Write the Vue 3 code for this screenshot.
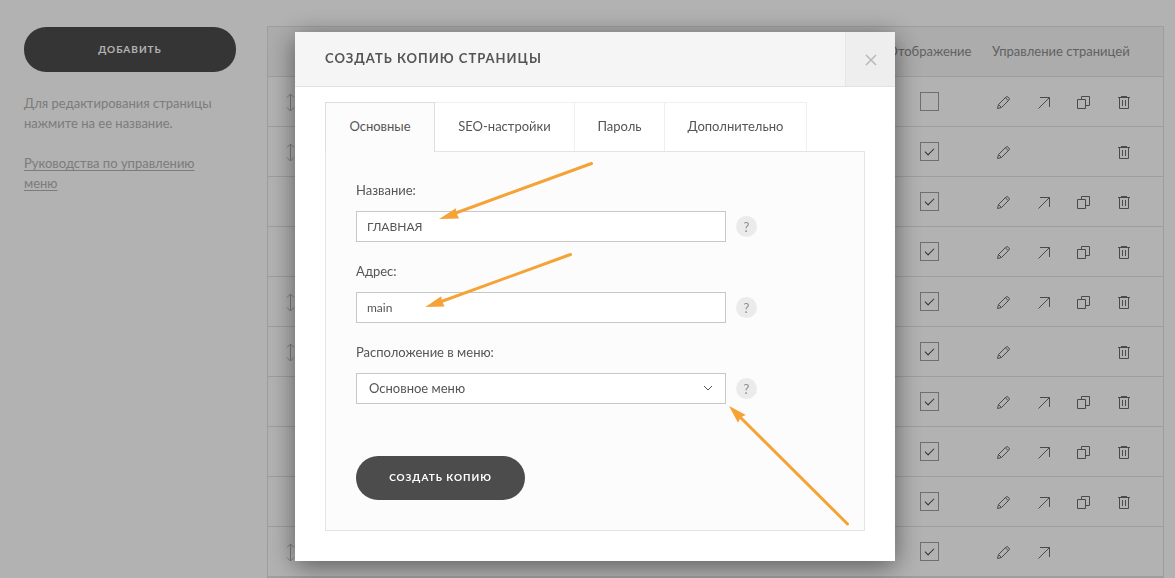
<script setup>
import { ref } from 'vue'

const rows = ref([
  { drag: true, shown: false, open: true, copy: true, remove: true },
  { drag: true, shown: true, open: false, copy: false, remove: true },
  { drag: false, shown: true, open: true, copy: true, remove: true },
  { drag: false, shown: true, open: true, copy: true, remove: true },
  { drag: true, shown: true, open: true, copy: true, remove: true },
  { drag: true, shown: true, open: false, copy: false, remove: true },
  { drag: false, shown: true, open: true, copy: true, remove: true },
  { drag: false, shown: true, open: true, copy: true, remove: true },
  { drag: false, shown: true, open: true, copy: true, remove: true },
  { drag: true, shown: true, open: true, copy: false, remove: false }
])

const tabs = ['Основные', 'SEO-настройки', 'Пароль', 'Дополнительно']
const activeTab = ref(0)
const title = ref('ГЛАВНАЯ')
const address = ref('main')
const menu = ref('main')
</script>

<template>
  <div class="page">
    <aside class="side">
      <button type="button" class="pill add">Добавить</button>
      <p class="hint">Для редактирования страницы нажмите на ее название.</p>
      <a href="#" class="guide">Руководства по управлению меню</a>
    </aside>

    <main class="content">
      <table class="pages">
        <thead>
          <tr>
            <th class="c-drag"></th>
            <th></th>
            <th class="c-show">Отображение</th>
            <th class="c-manage">Управление страницей</th>
          </tr>
        </thead>
        <tbody>
          <tr v-for="(row, i) in rows" :key="i">
            <td class="c-drag">
              <svg v-if="row.drag" class="drag" width="9" height="19" viewBox="0 0 9 19">
                <path d="M4.500 1v17M1 4.500l3.500-3.500L8 4.500M1 14.500l3.500 3.500L8 14.500" />
              </svg>
            </td>
            <td></td>
            <td class="c-show">
              <input v-model="row.shown" type="checkbox" class="check" aria-label="Отображение" />
            </td>
            <td class="c-manage">
              <div class="actions">
                <button type="button" class="act" aria-label="Редактировать">
                  <svg width="16" height="17" viewBox="0 0 16 17">
                    <path d="M2.500 15.500l1-4 7.300-7.300a1.700 1.700 0 0 1 2.400 0l.6.6a1.700 1.700 0 0 1 0 2.400L6.500 14.500zM3.500 11.500l3 3M10.300 4.700l3 3" />
                  </svg>
                </button>
                <button v-if="row.open" type="button" class="act open" aria-label="Открыть">
                  <svg width="16" height="17" viewBox="0 0 16 17">
                    <path d="M3.500 15.500l11-11M5 4.500h9.500V14" />
                  </svg>
                </button>
                <button v-if="row.copy" type="button" class="act copy" aria-label="Копировать">
                  <svg width="16" height="17" viewBox="0 0 16 17">
                    <path d="M2.500 6.500h8v9h-8zM6.500 6.500v-3h8v9h-4" />
                  </svg>
                </button>
                <button v-if="row.remove" type="button" class="act remove" aria-label="Удалить">
                  <svg width="16" height="17" viewBox="0 0 16 17">
                    <path d="M3 4.500h12M6 3.500h6M4.500 4.500v11h9v-11M7.500 7v6M10.500 7v6" />
                  </svg>
                </button>
              </div>
            </td>
          </tr>
        </tbody>
      </table>
    </main>
  </div>

  <div class="overlay">
    <section class="dialog" role="dialog" aria-labelledby="dialog-title">
      <header class="head">
        <h1 id="dialog-title" class="title">Создать копию страницы</h1>
        <button type="button" class="close" aria-label="Закрыть">
          <svg width="12" height="12" viewBox="0 0 12 12"><path d="M1 1l10 10M11 1L1 11" /></svg>
        </button>
      </header>

      <div class="body">
        <div class="tabs" role="tablist">
          <button
            v-for="(tab, i) in tabs"
            :key="tab"
            type="button"
            role="tab"
            class="tab"
            :class="{ active: i === activeTab }"
            :aria-selected="i === activeTab"
            @click="activeTab = i"
          >{{ tab }}</button>
        </div>

        <form class="panel" @submit.prevent>
          <div class="field">
            <label for="f-title">Название:</label>
            <div class="line">
              <input id="f-title" v-model="title" type="text" class="control" />
              <button type="button" class="help">?</button>
            </div>
          </div>
          <div class="field">
            <label for="f-address">Адрес:</label>
            <div class="line">
              <input id="f-address" v-model="address" type="text" class="control" />
              <button type="button" class="help">?</button>
            </div>
          </div>
          <div class="field">
            <label for="f-menu">Расположение в меню:</label>
            <div class="line">
              <div class="select">
                <select id="f-menu" v-model="menu" class="control">
                  <option value="main">Основное меню</option>
                </select>
                <svg class="chevron" width="10" height="6" viewBox="0 0 10 6"><path d="M1 1l4 4 4-4" /></svg>
              </div>
              <button type="button" class="help">?</button>
            </div>
          </div>
          <button type="submit" class="pill submit">Создать копию</button>
        </form>
      </div>

      <svg class="arrows" width="600" height="529" viewBox="0 0 600 529" aria-hidden="true">
        <path class="shaft" d="M296.500 131.500L158 182M275.500 222.500L145 270M552.500 492L445 385" />
        <path class="tip" d="M147.500 186l12.500-8 .5 3.500 2 4zM133.500 274l12-8 .5 3.500 2 4zM436.500 376.500l12 6.500-3.500 1.500-2 4z" />
      </svg>
    </section>
  </div>
</template>

<style>
body {
  background: #fff;
  overflow: hidden;
}
</style>

<style scoped>
.page,
.overlay {
  font-family: Lato, "Noto Sans", sans-serif;
  font-size: 13px;
  line-height: 20px;
}
button,
input,
select {
  font: inherit;
  color: inherit;
  margin: 0;
}
button {
  padding: 0;
  border: 0;
  background: none;
}
svg {
  display: block;
  fill: none;
  stroke: currentColor;
}
.page {
  display: flex;
  align-items: flex-start;
  height: 100vh;
  overflow: hidden;
}
.side {
  box-sizing: border-box;
  flex: 0 0 267px;
  padding: 27px 31px 0 24px;
  color: #b2b2b2;
}
.pill {
  display: block;
  padding-bottom: 2px;
  border-radius: 22px;
  background: #4c4c4c;
  color: #fff;
  font-size: 10px;
  font-weight: 700;
  letter-spacing: 1px;
  text-transform: uppercase;
}
.add {
  width: 100%;
  height: 45px;
}
.hint {
  margin: 21px 0 20px;
}
.guide {
  display: block;
  padding-right: 20px;
  color: inherit;
  text-underline-offset: 2px;
}
.content {
  flex: 1;
  padding: 26px 11px 0 0;
}
.pages {
  width: 100%;
  table-layout: fixed;
  border: 1px solid #e2e2e2;
  border-spacing: 0;
}
.pages th,
.pages td {
  box-sizing: border-box;
  height: 50px;
  padding: 0;
  border-bottom: 1px solid #e2e2e2;
}
.pages th {
  padding-bottom: 2px;
  background: #f7f7f7;
  color: #8c8c8c;
  font-weight: 400;
  text-align: left;
  white-space: nowrap;
}
.c-drag {
  width: 45px;
}
.pages .c-show {
  width: 107px;
  text-align: center;
}
.c-manage {
  width: 180px;
}
.pages th.c-manage {
  padding-left: 9px;
}
.drag {
  margin: 2px auto 0;
  color: #b4b4b4;
}
.check {
  appearance: none;
  display: grid;
  place-items: center;
  width: 19px;
  height: 19px;
  margin: 0 auto;
  border: 1px solid #a0a0a0;
}
.check:checked::before {
  content: "";
  width: 8px;
  height: 4px;
  margin-bottom: 3px;
  border: solid #444;
  border-width: 0 0 1px 1px;
  transform: rotate(-45deg);
}
.actions {
  display: grid;
  grid-template-columns: repeat(4, 40px);
  color: #6a6a6a;
}
.act {
  display: grid;
  place-items: center;
  height: 49px;
}
.open {
  grid-column: 2;
}
.copy {
  grid-column: 3;
}
.remove {
  grid-column: 4;
}
.overlay {
  position: fixed;
  inset: 0;
  display: flex;
  justify-content: center;
  align-items: flex-start;
  padding: 32px 0 0 15px;
  background: rgba(0, 0, 0, 0.3);
  color: #555;
}
.dialog {
  position: relative;
  width: 600px;
  background: #fff;
  box-shadow: 0 5px 25px rgba(0, 0, 0, 0.5);
}
.head {
  display: flex;
  justify-content: space-between;
  height: 54px;
  border-bottom: 1px solid #e2e2e2;
  background: #f5f5f5;
}
.title {
  margin: 0;
  padding-left: 30px;
  font-size: 13px;
  font-weight: 700;
  line-height: 52px;
  letter-spacing: 1px;
  text-transform: uppercase;
}
.close {
  display: grid;
  place-items: center;
  width: 50px;
  padding-top: 2px;
  border-left: 1px solid #e6e6e6;
  background: #eee;
  color: #b8b8b8;
  stroke-width: 1.5;
}
.body {
  padding: 15px 30px 30px;
}
.tabs {
  display: grid;
  grid-template-columns: 110px 140px 90px 142px;
}
.tab {
  height: 49px;
  padding-bottom: 2px;
  border: solid #efefef;
  border-width: 1px 1px 0 0;
}
.tab.active {
  height: 50px;
  margin-bottom: -1px;
  padding-bottom: 3px;
  border-color: #ddd;
  border-left-width: 1px;
  background: #fcfcfc;
  z-index: 1;
}
.panel {
  padding: 28px 30px 30px;
  border: 1px solid #e4e4e4;
  background: #fcfcfc;
}
.field {
  margin-bottom: 19px;
}
.field label {
  display: block;
  margin-bottom: 11px;
}
.line {
  display: flex;
  align-items: center;
  gap: 10px;
}
.control {
  box-sizing: border-box;
  width: 370px;
  height: 31px;
  padding: 0 10px;
  border: 1px solid #c8c8c8;
  border-radius: 0;
  background: #fff;
  font-size: 12px;
}
.select {
  position: relative;
}
select.control {
  display: block;
  appearance: none;
  padding: 0 12px 2px;
  font-size: 13px;
}
.chevron {
  position: absolute;
  right: 13px;
  top: 12px;
}
.help {
  width: 21px;
  height: 21px;
  border-radius: 50%;
  background: #ebebeb;
  color: #8c8c8c;
  font-size: 13px;
}
.submit {
  width: 169px;
  height: 44px;
  margin-top: 52px;
}
.arrows {
  position: absolute;
  inset: 0;
  pointer-events: none;
}
.shaft {
  stroke: #f5a336;
  stroke-width: 3;
  stroke-linecap: round;
}
.tip {
  fill: #f5a336;
  stroke: #f5a336;
  stroke-width: 2;
}
</style>
